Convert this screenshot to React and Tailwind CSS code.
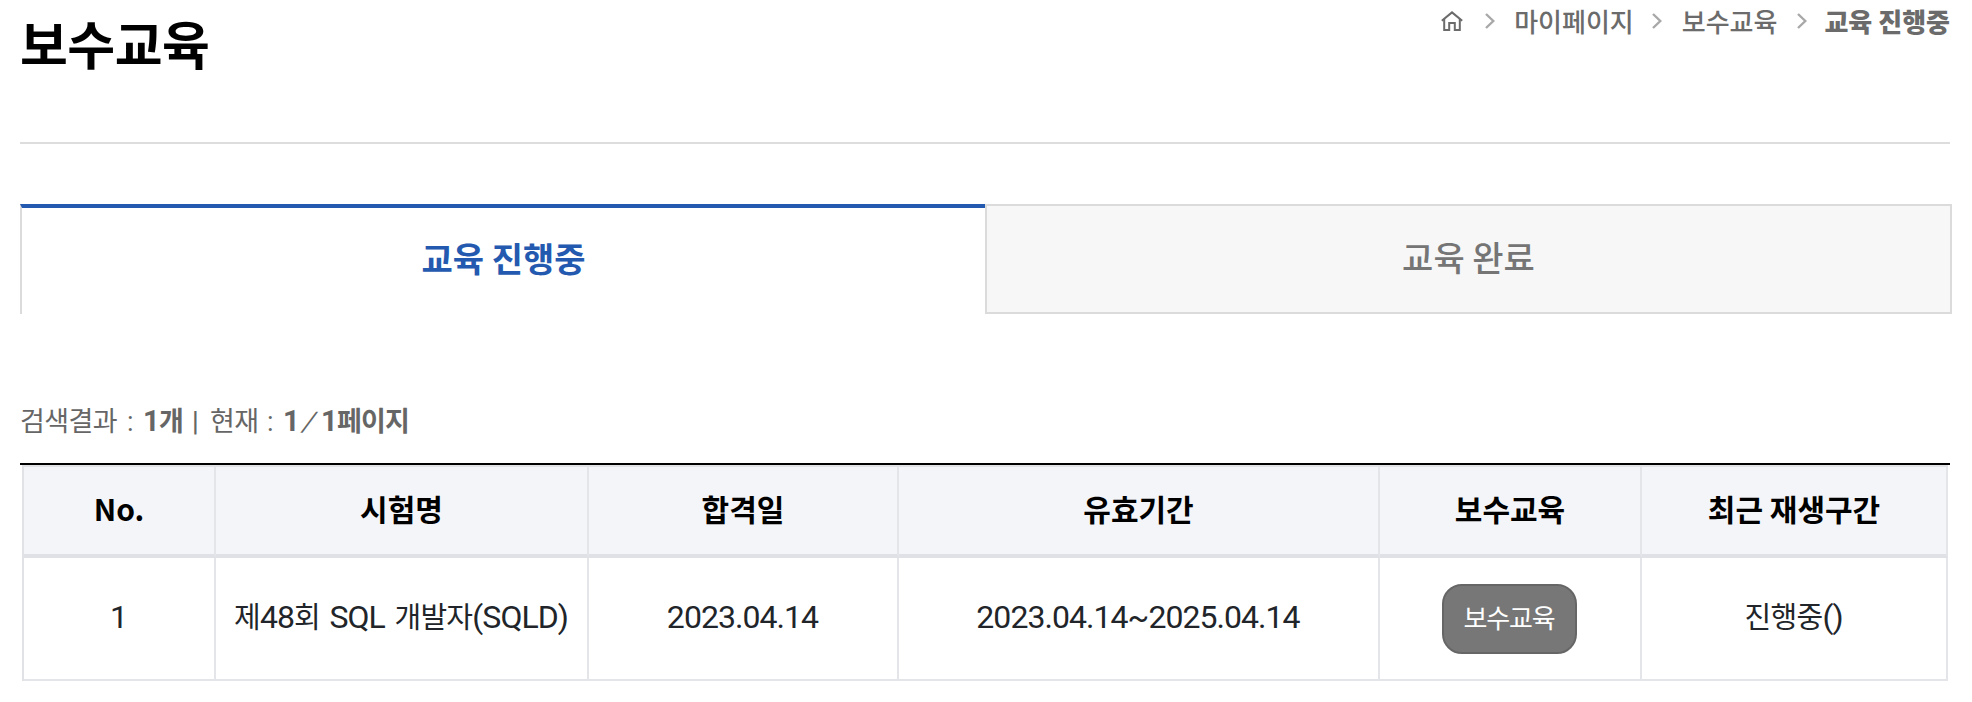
import React from "react";

const kr = "font-['Noto_Sans_CJK_KR',sans-serif]";

const columns = [
  { label: "No.", width: "w-[192px]" },
  { label: "시험명", width: "w-[373px]" },
  { label: "합격일", width: "w-[310px]" },
  { label: "유효기간", width: "w-[481px]" },
  { label: "보수교육", width: "w-[262px]" },
  { label: "최근 재생구간", width: "w-[306px]" },
];

const rows = [
  {
    no: "1",
    name: "제48회 SQL 개발자(SQLD)",
    passed: "2023.04.14",
    period: "2023.04.14~2025.04.14",
    progress: "진행중()",
  },
];

// Hangul and Latin runs use different faces and tracking
function CellText({ children }) {
  return (
    <span className="block pr-px pb-[3px] whitespace-pre">
      {children.split(/([가-힣]+)/).map((part, i) =>
        i % 2 ? (
          <span key={i} className="text-[29px] tracking-[-0.7px]">{part}</span>
        ) : (
          <span key={i} className="font-[Roboto] text-[32px] tracking-[-0.95px] [word-spacing:2.5px]">{part}</span>
        )
      )}
    </span>
  );
}

function HomeIcon() {
  return (
    <svg width="22" height="20" viewBox="0 0 22 20" fill="none" stroke="#6b6b6b" strokeWidth="2">
      <path d="M0.8 9.8 L11 1.4 L21.2 9.8" />
      <path d="M3.2 8 V19 H8.2 V12 H13.8 V19 H18.8 V8" />
    </svg>
  );
}

function Chevron() {
  return (
    <svg width="10" height="16" viewBox="0 0 10 16" fill="none" stroke="#a8a8a8" strokeWidth="2.4">
      <path d="M1 1 L8.3 8 L1 15" />
    </svg>
  );
}

export default function App() {
  return (
    <div className={`h-[702px] w-[1972px] overflow-hidden bg-white pl-5 ${kr}`}>
      <header className="flex h-36 w-[1930px] items-start justify-between border-b-2 border-[#ddd]">
        <h1 className="mt-[5px] text-[52px] leading-[76px] font-bold tracking-[-0.5px] text-black">보수교육</h1>
        <nav className="flex h-[42px] items-center text-[26px] leading-[42px] font-medium text-[#6b6b6b]">
          <HomeIcon />
          <span className="w-[22px]" />
          <Chevron />
          <span className="ml-[19px]">마이페이지</span>
          <span className="w-[18px]" />
          <Chevron />
          <span className="ml-5">보수교육</span>
          <span className="w-5" />
          <Chevron />
          <span className="ml-[17px] font-black">교육 진행중</span>
        </nav>
      </header>

      <div className="mt-[60px] flex h-[110px] w-[1932px] text-[34px] leading-[100px]">
        <button type="button" className="w-[965px] border-t-4 border-l-2 border-t-[#2459b0] border-l-[#dbdbdb] bg-white pb-1.5 font-bold text-[#2459b0]">
          교육 진행중
        </button>
        <button type="button" className="w-[967px] border-2 border-[#dbdbdb] bg-[#f7f7f7] pb-1 font-medium text-[#757575]">
          교육 완료
        </button>
      </div>

      <p className="mt-[84px] flex h-[65px] items-baseline text-[27px] leading-[44px] tracking-[-0.6px] text-[#666]">
        <span className="w-[107px]">검색결과</span>
        <span className="w-4 font-[Roboto]">:</span>
        <b className="w-4 font-[Roboto] text-[29px]">1</b>
        <b className="w-[33px]">개</b>
        <span className="w-[18px] font-[Roboto] font-medium">|</span>
        <span className="w-[57px]">현재</span>
        <span className="w-4 font-[Roboto]">:</span>
        <b className="w-[21px] font-[Roboto] text-[29px]">1</b>
        <span className="w-[17px] -skew-x-[20deg] font-[Roboto] text-[27px]">/</span>
        <b className="w-4 font-[Roboto] text-[29px]">1</b>
        <b className="tracking-[-0.9px]">페이지</b>
      </p>

      <div className="w-[1930px] border-t-2 border-black px-0.5">
        <table className="w-[1926px] table-fixed border-separate border-spacing-0 border-t-2 border-l-2 border-[#e0e2e6] text-center">
          <thead>
            <tr className="h-[91px] bg-[#f4f5f8] text-[30px] text-black">
              {columns.map((col) => (
                <th key={col.label} className={`${col.width} border-r-2 border-b-4 border-r-[#e3e5e8] border-b-[#dfe1e7] p-0 pb-1 font-bold`}>
                  {col.label}
                </th>
              ))}
            </tr>
          </thead>
          <tbody>
            {rows.map((row) => (
              <tr key={row.no} className="h-[123px] text-[#212529] *:border-r-2 *:border-b-2 *:border-[#e3e5e8] *:p-0">
                <td><CellText>{row.no}</CellText></td>
                <td><CellText>{row.name}</CellText></td>
                <td><CellText>{row.passed}</CellText></td>
                <td><CellText>{row.period}</CellText></td>
                <td>
                  <button type="button" className="mr-0.5 h-[70px] w-[135px] rounded-[20px] border-2 border-[#666] bg-[#777] pb-1 align-middle text-[26px] tracking-[-1.2px] text-white">
                    보수교육
                  </button>
                </td>
                <td><CellText>{row.progress}</CellText></td>
              </tr>
            ))}
          </tbody>
        </table>
      </div>
    </div>
  );
}
